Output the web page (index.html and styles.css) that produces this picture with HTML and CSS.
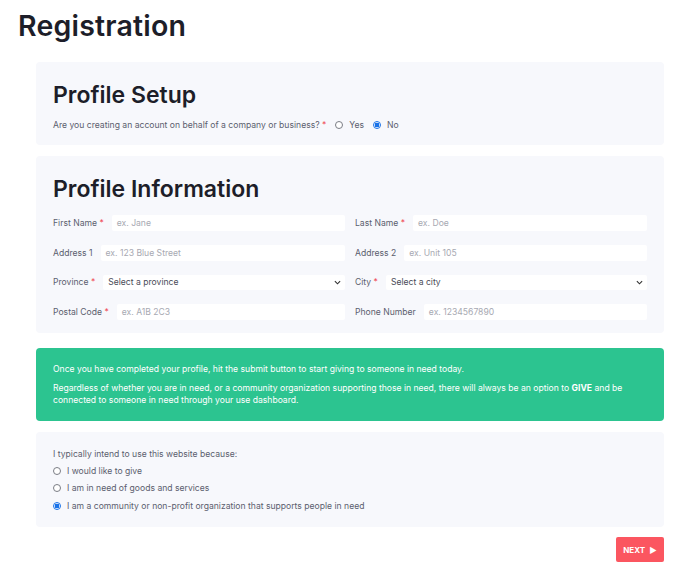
FILE: index.html
```html
<!DOCTYPE html>
<html>
<head>
<meta charset="utf-8">
<link rel="stylesheet" href="styles.css">
</head>
<body>
<h1 class="page-title">Registration</h1>
<div class="wrap">
  <section class="card setup">
    <h2 class="card-title">Profile Setup</h2>
    <div class="question">
      <span class="q-text">Are you creating an account on behalf of a company or business? <span class="req">*</span></span>
      <label class="radio"><span class="dot"></span>Yes</label>
      <label class="radio"><span class="dot on"></span>No</label>
    </div>
  </section>

  <section class="card info">
    <h2 class="card-title">Profile Information</h2>
    <div class="grid">
      <div class="field"><span class="lbl">First Name <span class="req">*</span></span><span class="input ph">ex. Jane</span></div>
      <div class="field"><span class="lbl">Last Name <span class="req">*</span></span><span class="input ph">ex. Doe</span></div>
      <div class="field"><span class="lbl">Address 1</span><span class="input ph">ex. 123 Blue Street</span></div>
      <div class="field"><span class="lbl">Address 2</span><span class="input ph">ex. Unit 105</span></div>
      <div class="field"><span class="lbl">Province <span class="req">*</span></span><span class="input select">Select a province<svg class="chev" viewBox="0 0 8 5" width="7" height="5"><path d="M1 1l3 3 3-3" fill="none" stroke="#333" stroke-width="1.3"/></svg></span></div>
      <div class="field"><span class="lbl">City <span class="req">*</span></span><span class="input select">Select a city<svg class="chev" viewBox="0 0 8 5" width="7" height="5"><path d="M1 1l3 3 3-3" fill="none" stroke="#333" stroke-width="1.3"/></svg></span></div>
      <div class="field"><span class="lbl">Postal Code <span class="req">*</span></span><span class="input ph">ex. A1B 2C3</span></div>
      <div class="field"><span class="lbl">Phone Number</span><span class="input ph">ex. 1234567890</span></div>
    </div>
  </section>

  <section class="notice">
    <p>Once you have completed your profile, hit the submit button to start giving to someone in need today.</p>
    <p>Regardless of whether you are in need, or a community organization supporting those in need, there will always be an option to <b>GIVE</b> and be connected to someone in need through your use dashboard.</p>
  </section>

  <section class="card intent">
    <p class="intent-q">I typically intend to use this website because:</p>
    <label class="radio opt"><span class="dot"></span>I would like to give</label>
    <label class="radio opt"><span class="dot"></span>I am in need of goods and services</label>
    <label class="radio opt"><span class="dot on"></span>I am a community or non-profit organization that supports people in need</label>
  </section>

  <div class="actions">
    <button class="next">NEXT <span class="tri">&#9654;</span></button>
  </div>
</div>
</body>
</html>
```
FILE: styles.css
```css
* { box-sizing: border-box; }
body {
  margin: 0;
  background: #fff;
  font-family: Inter, "Noto Sans", sans-serif;
  color: #5b5e6e;
}
.page-title {
  margin: 0;
  padding: 9px 0 0 18px;
  font-size: 28.5px;
  line-height: 34px;
  font-weight: 600;
  color: #1d1e29;
  letter-spacing: 0.2px;
}
.wrap {
  margin: 19px 36px 0 36px;
  display: flex;
  flex-direction: column;
}
.card {
  background: #f7f8fc;
  border-radius: 4px;
  padding: 0 17px;
}
.card-title {
  margin: 0;
  font-size: 23px;
  font-weight: 600;
  color: #1d1e29;
  line-height: 28px;
}
.setup {
  height: 83px;
  padding-top: 19px;
}
.question {
  margin-top: 10px;
  display: flex;
  align-items: center;
  font-size: 8.6px;
  height: 12px;
}
.q-text { margin-right: 9px; }
.req { color: #f0505a; }
.radio {
  display: inline-flex;
  align-items: center;
  margin-right: 9px;
}
.dot {
  width: 8px;
  height: 8px;
  border: 1px solid #7a7d85;
  border-radius: 50%;
  margin-right: 6px;
  background: #fff;
  flex: none;
}
.dot.on {
  border-color: #1a73e8;
  background: radial-gradient(circle, #1a73e8 0 2.2px, #fff 2.6px);
}
.info {
  margin-top: 11px;
  height: 177px;
  padding-top: 19px;
}
.grid {
  margin-top: 12px;
  display: grid;
  grid-template-columns: 1fr 1fr;
  column-gap: 10px;
  row-gap: 13.5px;
}
.field {
  display: flex;
  align-items: center;
  height: 16px;
  font-size: 8.6px;
}
.lbl { margin-right: 8px; white-space: nowrap; }
.input {
  flex: 1;
  height: 16px;
  background: #fff;
  border-radius: 2px;
  display: flex;
  align-items: center;
  padding-left: 5px;
  padding-right: 4px;
  font-size: 8.6px;
}
.ph { color: #a7a9b2; }
.select { color: #4a4c58; justify-content: space-between; height: 15px; }
.chev { flex: none; }
.notice {
  margin-top: 15px;
  height: 73px;
  background: #2cc490;
  border-radius: 4px;
  color: #fff;
  padding: 15px 17px 0 17px;
  font-size: 8.6px;
  line-height: 12px;
}
.notice p { margin: 0 0 7px 0; }
.notice b { font-weight: 700; }
.intent {
  margin-top: 11px;
  height: 95px;
  padding-top: 16px;
  font-size: 8.6px;
}
.intent-q { margin: 0 0 2px 0; line-height: 12px; }
.opt {
  display: flex;
  height: 17.5px;
  margin: 0;
}
.opt .dot { margin-left: 0; margin-right: 6px; }
.actions {
  display: flex;
  justify-content: flex-end;
  margin-top: 10px;
}
.next {
  width: 48px;
  height: 25px;
  background: #fb5660;
  border: none;
  border-radius: 2px;
  color: #fff;
  font-family: Inter, sans-serif;
  font-weight: 700;
  font-size: 8px;
  padding: 0;
  display: flex;
  align-items: center;
  justify-content: center;
  gap: 4px;
}
.tri { font-size: 8px; }
```
